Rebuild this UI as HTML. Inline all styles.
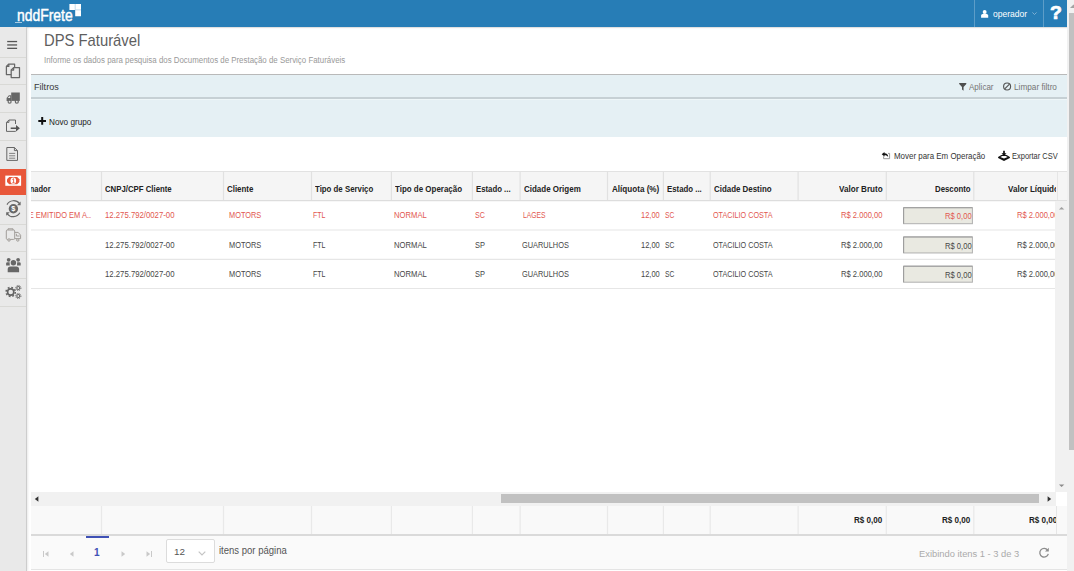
<!DOCTYPE html>
<html lang="pt-BR"><head><meta charset="utf-8"><title>DPS Faturável</title>
<style>
html,body{margin:0;padding:0}
body{width:1074px;height:571px;overflow:hidden;background:#fff;position:relative;font-family:"Liberation Sans",sans-serif}
.t{position:absolute;white-space:pre;line-height:1;display:block}
div,svg{position:absolute}
</style></head><body>
<div style="position:absolute;left:0px;top:0px;width:1067px;height:27px;background:#277db6;box-shadow:0 1px 1px rgba(0,0,0,.12)"></div>
<div style="position:absolute;left:974px;top:0px;width:1px;height:27px;background:rgba(255,255,255,.25);"></div>
<div style="position:absolute;left:1043px;top:0px;width:1px;height:27px;background:rgba(255,255,255,.25);"></div>
<svg style="left:69px;top:3px" width="13" height="14" viewBox="0 0 13 14"><path d="M0.4 1H12V13.3H6.2V6.9H0.4Z" fill="#fff"/><path d="M6.2 1V6.9H12" stroke="#a9cce4" stroke-width="0.7" fill="none"/></svg>
<div style="position:absolute;left:15px;top:22px;width:7px;height:1px;background:rgba(255,255,255,.6);"></div>
<svg style="left:981.3px;top:9.5px" width="7.3" height="8" viewBox="0 0 8 9"><circle cx="4" cy="2.3" r="2.2" fill="#fff"/><path d="M0 8.6V6.2C0 4.8 1.4 4.2 4 4.2S8 4.8 8 6.2V8.6Z" fill="#fff"/></svg>
<svg style="left:1031.5px;top:11.5px" width="5" height="3.4" viewBox="0 0 6 4"><path d="M0.5 0.5L3 3L5.5 0.5" stroke="#8fbbd9" stroke-width="1" fill="none"/></svg>
<div style="position:absolute;left:1067px;top:0px;width:7px;height:571px;background:#f1f1f1;"></div>
<div style="position:absolute;left:1069px;top:13px;width:5px;height:437px;background:#c1c1c1;"></div>
<svg style="left:1067px;top:0" width="7" height="13" viewBox="0 0 7 13"><path d="M3 8L6.5 4.5L10 8Z" fill="#a3a3a3"/></svg>
<div style="position:absolute;left:0px;top:27px;width:26px;height:544px;background:#e9e9e9;"></div>
<div style="position:absolute;left:26px;top:27px;width:1px;height:544px;background:#cdcdcd;box-shadow:1px 0 2px rgba(0,0,0,.13)"></div>
<div style="position:absolute;left:0px;top:57px;width:26px;height:1px;background:#d9d9d6;"></div>
<div style="position:absolute;left:0px;top:84px;width:26px;height:1px;background:#d9d9d6;"></div>
<div style="position:absolute;left:0px;top:112px;width:26px;height:1px;background:#d9d9d6;"></div>
<div style="position:absolute;left:0px;top:140px;width:26px;height:1px;background:#d9d9d6;"></div>
<div style="position:absolute;left:0px;top:224px;width:26px;height:1px;background:#d9d9d6;"></div>
<div style="position:absolute;left:0px;top:251px;width:26px;height:1px;background:#d9d9d6;"></div>
<div style="position:absolute;left:0px;top:278px;width:26px;height:1px;background:#d9d9d6;"></div>
<div style="position:absolute;left:0px;top:306px;width:26px;height:1px;background:#d9d9d6;"></div>
<div style="position:absolute;left:0px;top:169px;width:26px;height:26px;background:#e8573a;"></div>
<div style="position:absolute;left:31px;top:74px;width:1036px;height:63px;background:#e5f0f4;"></div>
<div style="position:absolute;left:31px;top:74px;width:1036px;height:1px;background:#b9b9b9;"></div>
<div style="position:absolute;left:31px;top:97px;width:1036px;height:1.5px;background:#c6d0d4;"></div>
<div style="position:absolute;left:31px;top:98.5px;width:1036px;height:1px;background:#eef6f8;"></div>
<div style="position:absolute;left:31px;top:171px;width:1036px;height:30px;background:#f5f5f5;border-top:1px solid #e2e2e2;box-sizing:border-box"></div>
<div style="position:absolute;left:31px;top:505.5px;width:1036px;height:28.5px;background:#f9f9f9;"></div>
<div id="grid" style="left:31px;top:171px;width:1025px;height:364px;overflow:hidden">

<svg style="left:0;top:0" width="1025" height="364" viewBox="31 171 1025 364">
<path d="M101.5 171.6V200.8" stroke="#e1e1e1" stroke-width="1.2"/>
<path d="M101.5 506V534" stroke="#e9e9e9" stroke-width="1.2"/>
<path d="M223.5 171.6V200.8" stroke="#e1e1e1" stroke-width="1.2"/>
<path d="M223.5 506V534" stroke="#e9e9e9" stroke-width="1.2"/>
<path d="M311.5 171.6V200.8" stroke="#e1e1e1" stroke-width="1.2"/>
<path d="M311.5 506V534" stroke="#e9e9e9" stroke-width="1.2"/>
<path d="M391.4 171.6V200.8" stroke="#e1e1e1" stroke-width="1.2"/>
<path d="M391.4 506V534" stroke="#e9e9e9" stroke-width="1.2"/>
<path d="M472.4 171.6V200.8" stroke="#e1e1e1" stroke-width="1.2"/>
<path d="M472.4 506V534" stroke="#e9e9e9" stroke-width="1.2"/>
<path d="M520.1 171.6V200.8" stroke="#e1e1e1" stroke-width="1.2"/>
<path d="M520.1 506V534" stroke="#e9e9e9" stroke-width="1.2"/>
<path d="M607.5 171.6V200.8" stroke="#e1e1e1" stroke-width="1.2"/>
<path d="M607.5 506V534" stroke="#e9e9e9" stroke-width="1.2"/>
<path d="M663.4 171.6V200.8" stroke="#e1e1e1" stroke-width="1.2"/>
<path d="M663.4 506V534" stroke="#e9e9e9" stroke-width="1.2"/>
<path d="M710.2 171.6V200.8" stroke="#e1e1e1" stroke-width="1.2"/>
<path d="M710.2 506V534" stroke="#e9e9e9" stroke-width="1.2"/>
<path d="M798.1 171.6V200.8" stroke="#e1e1e1" stroke-width="1.2"/>
<path d="M798.1 506V534" stroke="#e9e9e9" stroke-width="1.2"/>
<path d="M886.3 171.6V200.8" stroke="#e1e1e1" stroke-width="1.2"/>
<path d="M886.3 506V534" stroke="#e9e9e9" stroke-width="1.2"/>
<path d="M973.8 171.6V200.8" stroke="#e1e1e1" stroke-width="1.2"/>
<path d="M973.8 506V534" stroke="#e9e9e9" stroke-width="1.2"/>
<path d="M31 200.7H1067" stroke="#dddddd" stroke-width="1.2"/>
<path d="M31 230.0H1056" stroke="#e6e6e6" stroke-width="1.2"/>
<path d="M31 259.3H1056" stroke="#e6e6e6" stroke-width="1.2"/>
<path d="M31 288.5H1056" stroke="#e6e6e6" stroke-width="1.2"/>
<rect x="903.6" y="207.70" width="68.8" height="16" fill="#e9e9e1" stroke="#b0b0b0" stroke-width="1"/>
<path d="M903.6 223.70V207.70H972.4" stroke="#9c9c9c" stroke-width="1" fill="none"/>
<rect x="903.6" y="236.95" width="68.8" height="16" fill="#e9e9e1" stroke="#b0b0b0" stroke-width="1"/>
<path d="M903.6 252.95V236.95H972.4" stroke="#9c9c9c" stroke-width="1" fill="none"/>
<rect x="903.6" y="266.20" width="68.8" height="16" fill="#e9e9e1" stroke="#b0b0b0" stroke-width="1"/>
<path d="M903.6 282.20V266.20H972.4" stroke="#9c9c9c" stroke-width="1" fill="none"/>
</svg>
<span class="t" style="left:73.83px;top:14.00px;font-size:8.7px;font-weight:700;color:#222;transform:scaleX(0.8965);transform-origin:0 0;">CNPJ/CPF Cliente</span>
<span class="t" style="left:195.73px;top:14.00px;font-size:8.7px;font-weight:700;color:#222;transform:scaleX(0.9095);transform-origin:0 0;">Cliente</span>
<span class="t" style="left:283.83px;top:14.00px;font-size:8.7px;font-weight:700;color:#222;transform:scaleX(0.9024);transform-origin:0 0;">Tipo de Serviço</span>
<span class="t" style="left:364.33px;top:14.00px;font-size:8.7px;font-weight:700;color:#222;transform:scaleX(0.9155);transform-origin:0 0;">Tipo de Operação</span>
<span class="t" style="left:445.23px;top:14.00px;font-size:8.7px;font-weight:700;color:#222;transform:scaleX(0.8944);transform-origin:0 0;">Estado ...</span>
<span class="t" style="left:492.53px;top:14.00px;font-size:8.7px;font-weight:700;color:#222;transform:scaleX(0.9183);transform-origin:0 0;">Cidade Origem</span>
<span class="t" style="left:581.43px;top:14.00px;font-size:8.7px;font-weight:700;color:#222;transform:scaleX(0.9324);transform-origin:0 0;">Alíquota (%)</span>
<span class="t" style="left:635.83px;top:14.00px;font-size:8.7px;font-weight:700;color:#222;transform:scaleX(0.8996);transform-origin:0 0;">Estado ...</span>
<span class="t" style="left:682.83px;top:14.00px;font-size:8.7px;font-weight:700;color:#222;transform:scaleX(0.9114);transform-origin:0 0;">Cidade Destino</span>
<span class="t" style="left:808.23px;top:14.00px;font-size:8.7px;font-weight:700;color:#222;transform:scaleX(0.9321);transform-origin:0 0;">Valor Bruto</span>
<span class="t" style="left:903.83px;top:14.00px;font-size:8.7px;font-weight:700;color:#222;transform:scaleX(0.9003);transform-origin:0 0;">Desconto</span>
<span class="t" style="left:976.83px;top:14.00px;font-size:8.7px;font-weight:700;color:#222;transform:scaleX(0.9258);transform-origin:0 0;">Valor Líquido</span>
<span class="t" style="left:-34.67px;top:14.00px;font-size:8.7px;font-weight:700;color:#222;transform:scaleX(0.8600);transform-origin:100% 0;">Coordenador</span>
<span class="t" style="left:-22.52px;top:40.00px;font-size:8.6px;font-weight:400;color:#e2574f;transform:scaleX(0.8700);transform-origin:100% 0;">CTE EMITIDO EM A..</span>
<span class="t" style="left:73.53px;top:40.00px;font-size:8.6px;font-weight:400;color:#e2574f;transform:scaleX(0.9026);transform-origin:0 0;">12.275.792/0027-00</span>
<span class="t" style="left:197.83px;top:40.00px;font-size:8.6px;font-weight:400;color:#e2574f;transform:scaleX(0.8584);transform-origin:0 0;">MOTORS</span>
<span class="t" style="left:281.88px;top:40.00px;font-size:8.6px;font-weight:400;color:#e2574f;transform:scaleX(0.8135);transform-origin:0 0;">FTL</span>
<span class="t" style="left:363.13px;top:40.00px;font-size:8.6px;font-weight:400;color:#e2574f;transform:scaleX(0.8930);transform-origin:0 0;">NORMAL</span>
<span class="t" style="left:443.88px;top:40.00px;font-size:8.6px;font-weight:400;color:#e2574f;transform:scaleX(0.8309);transform-origin:0 0;">SC</span>
<span class="t" style="left:491.63px;top:40.00px;font-size:8.6px;font-weight:400;color:#e2574f;transform:scaleX(0.7898);transform-origin:0 0;">LAGES</span>
<span class="t" style="left:610.43px;top:40.00px;font-size:8.6px;font-weight:400;color:#e2574f;transform:scaleX(0.8712);transform-origin:0 0;">12,00</span>
<span class="t" style="left:634.38px;top:40.00px;font-size:8.6px;font-weight:400;color:#e2574f;transform:scaleX(0.7807);transform-origin:0 0;">SC</span>
<span class="t" style="left:681.93px;top:40.00px;font-size:8.6px;font-weight:400;color:#e2574f;transform:scaleX(0.8407);transform-origin:0 0;">OTACILIO COSTA</span>
<span class="t" style="left:810.43px;top:40.00px;font-size:8.6px;font-weight:400;color:#e2574f;transform:scaleX(0.8850);transform-origin:0 0;">R$ 2.000,00</span>
<span class="t" style="left:913.93px;top:41.00px;font-size:8.6px;font-weight:400;color:#e2574f;transform:scaleX(0.8849);transform-origin:0 0;">R$ 0,00</span>
<span class="t" style="left:986.33px;top:40.00px;font-size:8.6px;font-weight:400;color:#e2574f;transform:scaleX(0.8850);transform-origin:0 0;">R$ 2.000,00</span>
<span class="t" style="left:73.53px;top:70.00px;font-size:8.6px;font-weight:400;color:#464646;transform:scaleX(0.9026);transform-origin:0 0;">12.275.792/0027-00</span>
<span class="t" style="left:197.83px;top:70.00px;font-size:8.6px;font-weight:400;color:#464646;transform:scaleX(0.8584);transform-origin:0 0;">MOTORS</span>
<span class="t" style="left:281.88px;top:70.00px;font-size:8.6px;font-weight:400;color:#464646;transform:scaleX(0.8135);transform-origin:0 0;">FTL</span>
<span class="t" style="left:363.13px;top:70.00px;font-size:8.6px;font-weight:400;color:#464646;transform:scaleX(0.8930);transform-origin:0 0;">NORMAL</span>
<span class="t" style="left:443.88px;top:70.00px;font-size:8.6px;font-weight:400;color:#464646;transform:scaleX(0.8660);transform-origin:0 0;">SP</span>
<span class="t" style="left:491.33px;top:70.00px;font-size:8.6px;font-weight:400;color:#464646;transform:scaleX(0.8605);transform-origin:0 0;">GUARULHOS</span>
<span class="t" style="left:610.43px;top:70.00px;font-size:8.6px;font-weight:400;color:#464646;transform:scaleX(0.8712);transform-origin:0 0;">12,00</span>
<span class="t" style="left:634.38px;top:70.00px;font-size:8.6px;font-weight:400;color:#464646;transform:scaleX(0.7807);transform-origin:0 0;">SC</span>
<span class="t" style="left:681.93px;top:70.00px;font-size:8.6px;font-weight:400;color:#464646;transform:scaleX(0.8407);transform-origin:0 0;">OTACILIO COSTA</span>
<span class="t" style="left:810.43px;top:70.00px;font-size:8.6px;font-weight:400;color:#464646;transform:scaleX(0.8850);transform-origin:0 0;">R$ 2.000,00</span>
<span class="t" style="left:913.93px;top:71.00px;font-size:8.6px;font-weight:400;color:#464646;transform:scaleX(0.8849);transform-origin:0 0;">R$ 0,00</span>
<span class="t" style="left:986.33px;top:70.00px;font-size:8.6px;font-weight:400;color:#464646;transform:scaleX(0.8850);transform-origin:0 0;">R$ 2.000,00</span>
<span class="t" style="left:73.53px;top:99.00px;font-size:8.6px;font-weight:400;color:#464646;transform:scaleX(0.9026);transform-origin:0 0;">12.275.792/0027-00</span>
<span class="t" style="left:197.83px;top:99.00px;font-size:8.6px;font-weight:400;color:#464646;transform:scaleX(0.8584);transform-origin:0 0;">MOTORS</span>
<span class="t" style="left:281.88px;top:99.00px;font-size:8.6px;font-weight:400;color:#464646;transform:scaleX(0.8135);transform-origin:0 0;">FTL</span>
<span class="t" style="left:363.13px;top:99.00px;font-size:8.6px;font-weight:400;color:#464646;transform:scaleX(0.8930);transform-origin:0 0;">NORMAL</span>
<span class="t" style="left:443.88px;top:99.00px;font-size:8.6px;font-weight:400;color:#464646;transform:scaleX(0.8660);transform-origin:0 0;">SP</span>
<span class="t" style="left:491.33px;top:99.00px;font-size:8.6px;font-weight:400;color:#464646;transform:scaleX(0.8605);transform-origin:0 0;">GUARULHOS</span>
<span class="t" style="left:610.43px;top:99.00px;font-size:8.6px;font-weight:400;color:#464646;transform:scaleX(0.8712);transform-origin:0 0;">12,00</span>
<span class="t" style="left:634.38px;top:99.00px;font-size:8.6px;font-weight:400;color:#464646;transform:scaleX(0.7807);transform-origin:0 0;">SC</span>
<span class="t" style="left:681.93px;top:99.00px;font-size:8.6px;font-weight:400;color:#464646;transform:scaleX(0.8407);transform-origin:0 0;">OTACILIO COSTA</span>
<span class="t" style="left:810.43px;top:99.00px;font-size:8.6px;font-weight:400;color:#464646;transform:scaleX(0.8850);transform-origin:0 0;">R$ 2.000,00</span>
<span class="t" style="left:913.93px;top:100.00px;font-size:8.6px;font-weight:400;color:#464646;transform:scaleX(0.8849);transform-origin:0 0;">R$ 0,00</span>
<span class="t" style="left:986.33px;top:99.00px;font-size:8.6px;font-weight:400;color:#464646;transform:scaleX(0.8850);transform-origin:0 0;">R$ 2.000,00</span>
<span class="t" style="left:822.92px;top:345.00px;font-size:9px;font-weight:700;color:#222;transform:scaleX(0.8963);transform-origin:0 0;">R$ 0,00</span>
<span class="t" style="left:910.72px;top:345.00px;font-size:9px;font-weight:700;color:#222;transform:scaleX(0.8994);transform-origin:0 0;">R$ 0,00</span>
<span class="t" style="left:998.32px;top:345.00px;font-size:9px;font-weight:700;color:#222;transform:scaleX(0.8994);transform-origin:0 0;">R$ 0,00</span>
</div>
<div style="position:absolute;left:1056px;top:506px;width:1px;height:28px;background:#e6e6e6;"></div>
<div style="position:absolute;left:1057px;top:172px;width:1px;height:28px;background:#e6e6e6;"></div>
<div style="position:absolute;left:1056px;top:200px;width:11px;height:1px;background:#e0e0e0;"></div>
<div style="position:absolute;left:31px;top:534px;width:1036px;height:1.5px;background:#dadada;"></div>
<div style="position:absolute;left:31px;top:535.5px;width:1036px;height:33.5px;background:#fafafa;"></div>
<div style="position:absolute;left:31px;top:569px;width:1036px;height:1px;background:#e4e4e4;"></div>
<div style="position:absolute;left:31px;top:492px;width:1025px;height:13.5px;background:#f1f1f1;"></div>
<div style="position:absolute;left:501px;top:494px;width:538px;height:9px;background:#c1c1c1;"></div>
<svg style="left:34px;top:495.5px" width="5" height="6" viewBox="0 0 5 6"><path d="M4.4 0.3V5.7L0.8 3Z" fill="#333"/></svg>
<svg style="left:1047px;top:495.5px" width="5" height="6" viewBox="0 0 5 6"><path d="M0.6 0.3V5.7L4.2 3Z" fill="#333"/></svg>
<div style="position:absolute;left:1055px;top:201px;width:12px;height:291px;background:#f1f1f1;"></div>
<svg style="left:1057px;top:204.5px" width="9" height="6" viewBox="0 0 9 6"><path d="M1.9 4.6L4.6 1.9L7.3 4.6Z" fill="#a0a0a0"/></svg>
<svg style="left:1057px;top:483px" width="9" height="6" viewBox="0 0 9 6"><path d="M1.9 1.4L4.6 4.1L7.3 1.4Z" fill="#8c8c8c"/></svg>
<div style="position:absolute;left:85.5px;top:536px;width:23.5px;height:2px;background:#3f51b5;"></div>
<div style="position:absolute;left:166px;top:539px;width:48.5px;height:23.5px;background:#fff;box-sizing:border-box;border:1px solid #dcdcdc;border-radius:2px"></div>
<svg style="left:198px;top:551px" width="8" height="5" viewBox="0 0 8 5"><path d="M0.7 0.7L4 4L7.3 0.7" stroke="#c4c4c4" stroke-width="1.2" fill="none"/></svg>
<svg style="left:43px;top:551px" width="6" height="6" viewBox="0 0 6 6"><path d="M0 0H1V6H0ZM5.5 0.3V5.7L1.8 3Z" fill="#c9c9c9"/></svg>
<svg style="left:69px;top:551px" width="5" height="6" viewBox="0 0 5 6"><path d="M4.5 0.3V5.7L0.8 3Z" fill="#c9c9c9"/></svg>
<svg style="left:121px;top:551px" width="5" height="6" viewBox="0 0 5 6"><path d="M0.5 0.3V5.7L4.2 3Z" fill="#c9c9c9"/></svg>
<svg style="left:146px;top:551px" width="6" height="6" viewBox="0 0 6 6"><path d="M5 0H6V6H5ZM0.5 0.3V5.7L4.2 3Z" fill="#c9c9c9"/></svg>
<svg style="left:1038px;top:547px" width="12" height="12" viewBox="0 0 12 12"><path d="M9.6 3.2A4.3 4.3 0 1 0 10.3 6.8" stroke="#8c8c8c" stroke-width="1.3" fill="none"/><path d="M10.8 0.8V4.6H7Z" fill="#8c8c8c"/></svg>
<span class="t" style="left:16.68px;top:8.00px;font-size:16px;font-weight:400;color:#fff;transform:scaleX(0.8687);transform-origin:0 0;-webkit-text-stroke:0.45px #fff;">nddFrete</span>
<span class="t" style="left:992.62px;top:10.00px;font-size:9.2px;font-weight:400;color:#fff;transform:scaleX(0.9290);transform-origin:0 0;">operador</span>
<span class="t" style="left:1049.55px;top:5.00px;font-size:17.5px;font-weight:700;color:#fff;transform:scaleX(1.1118);transform-origin:0 0;-webkit-text-stroke:0.7px #fff;">?</span>
<span class="t" style="left:44.46px;top:32.00px;font-size:17px;font-weight:400;color:#5e5e5e;transform:scaleX(0.8709);transform-origin:0 0;">DPS Faturável</span>
<span class="t" style="left:44.13px;top:56.00px;font-size:8.3px;font-weight:400;color:#999;transform:scaleX(0.9507);transform-origin:0 0;">Informe os dados para pesquisa dos Documentos de Prestação de Serviço Faturáveis</span>
<span class="t" style="left:34.20px;top:82.00px;font-size:9.8px;font-weight:400;color:#3a3a3a;transform:scaleX(0.9295);transform-origin:0 0;">Filtros</span>
<span class="t" style="left:969.13px;top:83.00px;font-size:8.7px;font-weight:400;color:#757575;transform:scaleX(0.9242);transform-origin:0 0;">Aplicar</span>
<span class="t" style="left:1014.03px;top:83.00px;font-size:8.7px;font-weight:400;color:#757575;transform:scaleX(0.9462);transform-origin:0 0;">Limpar filtro</span>
<span class="t" style="left:49.23px;top:118.00px;font-size:8.5px;font-weight:400;color:#222;transform:scaleX(0.9656);transform-origin:0 0;">Novo grupo</span>
<span class="t" style="left:893.93px;top:152.00px;font-size:8.3px;font-weight:400;color:#333;transform:scaleX(0.9556);transform-origin:0 0;">Mover para Em Operação</span>
<span class="t" style="left:1012.43px;top:152.00px;font-size:8.3px;font-weight:400;color:#333;transform:scaleX(0.9014);transform-origin:0 0;">Exportar CSV</span>
<span class="t" style="left:94.30px;top:548.00px;font-size:10px;font-weight:700;color:#3f51b5;transform:scaleX(1.0067);transform-origin:0 0;">1</span>
<span class="t" style="left:174.41px;top:547.00px;font-size:9.8px;font-weight:400;color:#555;transform:scaleX(1.0064);transform-origin:0 0;">12</span>
<span class="t" style="left:218.79px;top:546.00px;font-size:10.3px;font-weight:400;color:#555;transform:scaleX(0.9254);transform-origin:0 0;">itens por página</span>
<span class="t" style="left:918.91px;top:549.00px;font-size:9.7px;font-weight:400;color:#aaa;transform:scaleX(0.9649);transform-origin:0 0;">Exibindo itens 1 - 3 de 3</span>
<svg style="left:0;top:0" width="27" height="320" viewBox="0 0 27 320">
<rect x="7.2" y="40.9" width="9.9" height="1.3" fill="#555"/>
<rect x="7.2" y="44.3" width="9.9" height="1.3" fill="#555"/>
<rect x="7.2" y="47.7" width="9.9" height="1.3" fill="#555"/>
<g fill="none" stroke="#676767" stroke-width="1.25" stroke-linejoin="round">
<path d="M8.8 64H14.6V74.6H6.4V66.4Z"/><path d="M8.8 64V66.4H6.4"/>
<path d="M13.6 67.6H19.5V77.5H11.2V70Z" fill="#e9e9e9"/><path d="M13.6 67.6V70H11.2"/>
</g>
<g fill="#676767"><rect x="11.2" y="92.5" width="8.6" height="8.4"/>
<path d="M11.2 95.2H8.9L6.6 98V100.9H11.2Z"/>
<circle cx="9.6" cy="101.7" r="2.1"/><circle cx="16.8" cy="101.7" r="2.1"/></g>
<circle cx="9.6" cy="101.7" r="0.9" fill="#e9e9e9"/><circle cx="16.8" cy="101.7" r="0.9" fill="#e9e9e9"/>
<path d="M10.2 96.2H9.3L7.8 98H10.2Z" fill="#e9e9e9"/>
<g fill="none" stroke="#676767" stroke-width="1" stroke-linejoin="round"><path d="M15.5 124V120H8.9L6.5 122.4V131.4H15.5V130.9"/><path d="M8.9 120V122.4H6.5"/></g>
<path d="M10.7 127.4H16V125L19.9 128.2L16 131.4V129H10.7Z" fill="#555"/>
<g fill="none" stroke="#676767" stroke-width="1" stroke-linejoin="round"><path d="M6.8 147.5H14.4L17.5 150.6V160.4H6.8Z"/><path d="M14.4 147.5V150.6H17.5"/>
<path d="M9.1 153.4H15.2M9.1 155.8H15.2M9.1 158.2H15.2" stroke-width="0.8"/></g>
<rect x="5.3" y="175.6" width="15.8" height="10.2" fill="#fff"/>
<path d="M9.2 177.1H17.2L19.4 179.3V182.1L17.2 184.3H9.2L7 182.1V179.3Z" fill="#e8573a"/>
<ellipse cx="13.3" cy="180.7" rx="2.8" ry="3.3" fill="#fff"/>
<path d="M12.4 179.5L13.6 178.7V182.8M12.3 182.8H14.6" stroke="#e8573a" stroke-width="0.9" fill="none"/>
<circle cx="13.4" cy="208.7" r="4.7" fill="#676767"/>
<text x="13.4" y="211.3" font-family="Liberation Sans, sans-serif" font-size="7.4" font-weight="700" fill="#fff" text-anchor="middle">$</text>
<g fill="none" stroke="#676767" stroke-width="1.2"><path d="M7 204.6A7.6 7.6 0 0 1 19.6 203.6"/><path d="M19.8 212.8A7.6 7.6 0 0 1 7.2 213.8"/></g>
<path d="M20.6 201.6V205.2H17Z" fill="#676767"/><path d="M6.2 215.8V212.2H9.8Z" fill="#676767"/>
<g fill="none" stroke="#a19d99" stroke-width="1" stroke-linejoin="round"><rect x="6.3" y="230" width="8.4" height="9.4" rx="1"/><path d="M8 230V228.8H13V230"/>
<path d="M14.7 232.4H18.2L20.6 235.2V238.6H14.7"/><path d="M16.4 233.8V236H19.6"/>
<circle cx="9" cy="240" r="1.2" fill="#e9e9e9"/><circle cx="17.8" cy="240" r="1.2" fill="#e9e9e9"/></g>
<g fill="#676767"><circle cx="8.7" cy="259.8" r="1.9"/><circle cx="18.1" cy="259.8" r="1.9"/>
<path d="M6.1 265.4V263.6Q6.1 262.2 7.5 262.2H9.6L9.8 265.4Z"/><path d="M20.7 265.4V263.6Q20.7 262.2 19.3 262.2H17.2L17 265.4Z"/>
<circle cx="13.4" cy="262.7" r="3.4" fill="#e9e9e9"/><circle cx="13.4" cy="262.7" r="2.7"/>
<path d="M7.7 272.2V269.4Q7.7 266.6 10.5 266.6H16.3Q19.1 266.6 19.1 269.4V272.2Z"/></g>
<g fill="none" stroke="#636363"><circle cx="10.7" cy="292" r="3.1" stroke-width="1.6"/><circle cx="10.7" cy="292" r="4.6" stroke-width="1.5" stroke-dasharray="1.8 1.81"/>
<circle cx="18.3" cy="288" r="1.5" stroke-width="1.1"/><circle cx="18.3" cy="288" r="2.6" stroke-width="1" stroke-dasharray="1.02 1.02"/>
<circle cx="18.3" cy="296" r="1.5" stroke-width="1.1"/><circle cx="18.3" cy="296" r="2.6" stroke-width="1" stroke-dasharray="1.02 1.02"/></g>
</svg>
<svg style="left:38px;top:117px" width="8" height="8" viewBox="0 0 8 8"><path d="M3.2 0.1H5.2V2.9H8V4.9H5.2V7.7H3.2V4.9H0.3V2.9H3.2Z" fill="#111"/></svg>
<svg style="left:959px;top:83px" width="8" height="8" viewBox="0 0 8 8"><path d="M0.2 0H7.3V0.9L4.55 3.9V7.7L3 6.6V3.9L0.2 0.9Z" fill="#4e4e4e"/></svg>
<svg style="left:1002px;top:82px" width="10" height="10" viewBox="0 0 10 10"><circle cx="5.1" cy="4.5" r="3.5" stroke="#555" stroke-width="1.15" fill="none"/><path d="M2.7 6.9L7.5 2.1" stroke="#555" stroke-width="1.15"/></svg>
<svg style="left:881px;top:151px" width="10" height="9" viewBox="0 0 10 9"><path d="M2.6 5.2V7.7H8.6V2.4H7" stroke="#9a9a9a" stroke-width="1" fill="none"/><path d="M0.7 3.3L3.5 1V2.3C5.9 2.3 7.2 3.6 7.2 6.2C6.4 4.8 5.3 4.3 3.5 4.3V5.6Z" fill="#111"/></svg>
<svg style="left:998px;top:150px" width="12" height="11" viewBox="0 0 12 11"><path d="M0.1 6.9L3.4 5H8.6L11.9 6.9V8L6 10.9L0.1 8Z" fill="#111"/><path d="M2.3 7L4.3 6.1H7.7L9.7 7L6 8.4Z" fill="#fff"/><path d="M5.15 0.7H6.85V3.2H8.5L6 6.3L3.5 3.2H5.15Z" fill="#111"/></svg>
</body></html>
